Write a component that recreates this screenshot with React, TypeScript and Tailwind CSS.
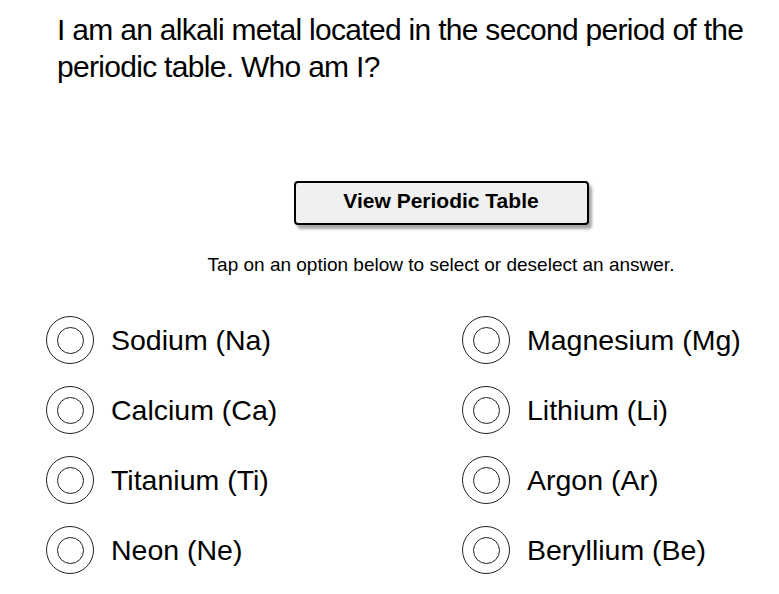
const options = [
  ["Sodium (Na)", "Magnesium (Mg)"],
  ["Calcium (Ca)", "Lithium (Li)"],
  ["Titanium (Ti)", "Argon (Ar)"],
  ["Neon (Ne)", "Beryllium (Be)"],
];

function Radio() {
  return (
    <span className="w-[48px] h-[48px] rounded-full border border-[#222] flex items-center justify-center shrink-0">
      <span className="w-[27px] h-[27px] rounded-full border-[1.5px] border-[#222]" />
    </span>
  );
}

function Option({ label }: { label: string }) {
  return (
    <div className="flex items-center gap-[17px] h-[50px]">
      <Radio />
      <span className="text-[28.5px] text-black">{label}</span>
    </div>
  );
}

export default function App() {
  return (
    <div className="w-[779px] h-[594px] bg-white overflow-hidden" style={{ fontFamily: '"Liberation Sans", Arial, sans-serif' }}>
      <h1 className="pl-[57px] pr-4 pt-[11px] text-[30px] leading-[37px] text-black tracking-[-0.7px] font-normal">
        I am an alkali metal located in the second period of the periodic table. Who am I?
      </h1>
      <div className="flex justify-center pl-[103px] mt-[96px]">
        <button className="w-[295px] h-[44px] pb-[5px] bg-[#f0f0f0] border-2 border-black rounded-[4px] shadow-[3px_4px_3px_rgba(0,0,0,0.35)] text-[21px] font-bold text-black">
          View Periodic Table
        </button>
      </div>
      <p className="text-center pl-[103px] mt-[26px] text-[19px] leading-[28px] text-black">
        Tap on an option below to select or deselect an answer.
      </p>
      <div className="grid grid-cols-[416px_1fr] gap-y-[20px] pl-[46px] mt-[36px]">
        {options.flat().map((o) => (
          <Option key={o} label={o} />
        ))}
      </div>
    </div>
  );
}
